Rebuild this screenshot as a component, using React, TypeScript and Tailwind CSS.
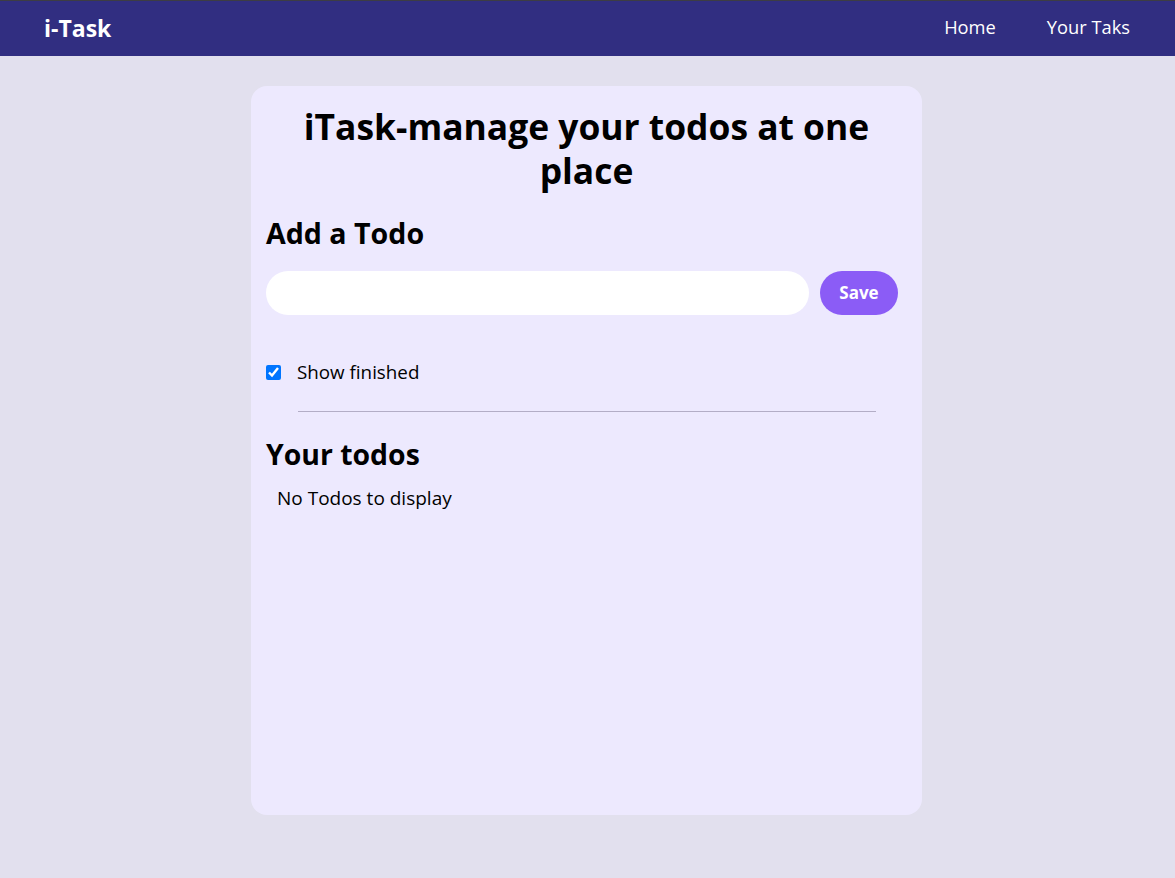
import { useState } from "react";

export default function App() {
  const [todo, setTodo] = useState("");
  const [showFinished, setShowFinished] = useState(true);

  return (
    <div className="min-h-screen bg-[#e2e0ee] font-['Open_Sans',sans-serif] text-black">
      {/* Top navigation */}
      <nav className="flex h-[56px] items-center justify-between border-t border-[#3d3d44] bg-[#312e81] px-[44px] text-white">
        <div className="text-[23px] font-bold leading-none">i-Task</div>
        <ul className="flex items-center gap-[51px] pb-[3px] pr-[1px] text-[18.3px] leading-none">
          <li className="cursor-pointer">Home</li>
          <li className="cursor-pointer">Your Taks</li>
        </ul>
      </nav>

      {/* Main card */}
      <div className="pr-[2px] pt-[30px]">
        <div className="mx-auto h-[729px] w-[671px] rounded-2xl bg-[#ede9fe] px-[15px] pt-[18px]">
          <h1 className="text-center text-[35.4px] font-bold leading-[44px]">
            iTask-manage your todos at one place
          </h1>

          <h2 className="mt-[24px] text-[28.6px] font-bold leading-[34px]">Add a Todo</h2>

          <div className="mt-[21px] flex items-center">
            <input
              type="text"
              value={todo}
              onChange={(e) => setTodo(e.target.value)}
              className="h-[44px] w-[543px] rounded-full bg-white px-5 text-base outline-none"
            />
            <button className="ml-[11px] h-[44px] w-[78px] rounded-full bg-[#8b5cf6] text-[17px] font-bold text-white">
              Save
            </button>
          </div>

          <label className="mt-[45px] flex items-center gap-[16px] text-[18.8px] leading-[24px]">
            <input
              type="checkbox"
              checked={showFinished}
              onChange={() => setShowFinished(!showFinished)}
              className="h-[15px] w-[15px] accent-[#0075ff]"
            />
            Show finished
          </label>

          <div className="mx-auto mt-[27px] h-px w-[578px] bg-[#b3adc6]" />

          <h2 className="mt-[25px] text-[28.4px] font-bold leading-[34px]">Your todos</h2>

          <div className="ml-[11px] mt-[14px] text-[19px] leading-[26px]">No Todos to display</div>
        </div>
      </div>
    </div>
  );
}
